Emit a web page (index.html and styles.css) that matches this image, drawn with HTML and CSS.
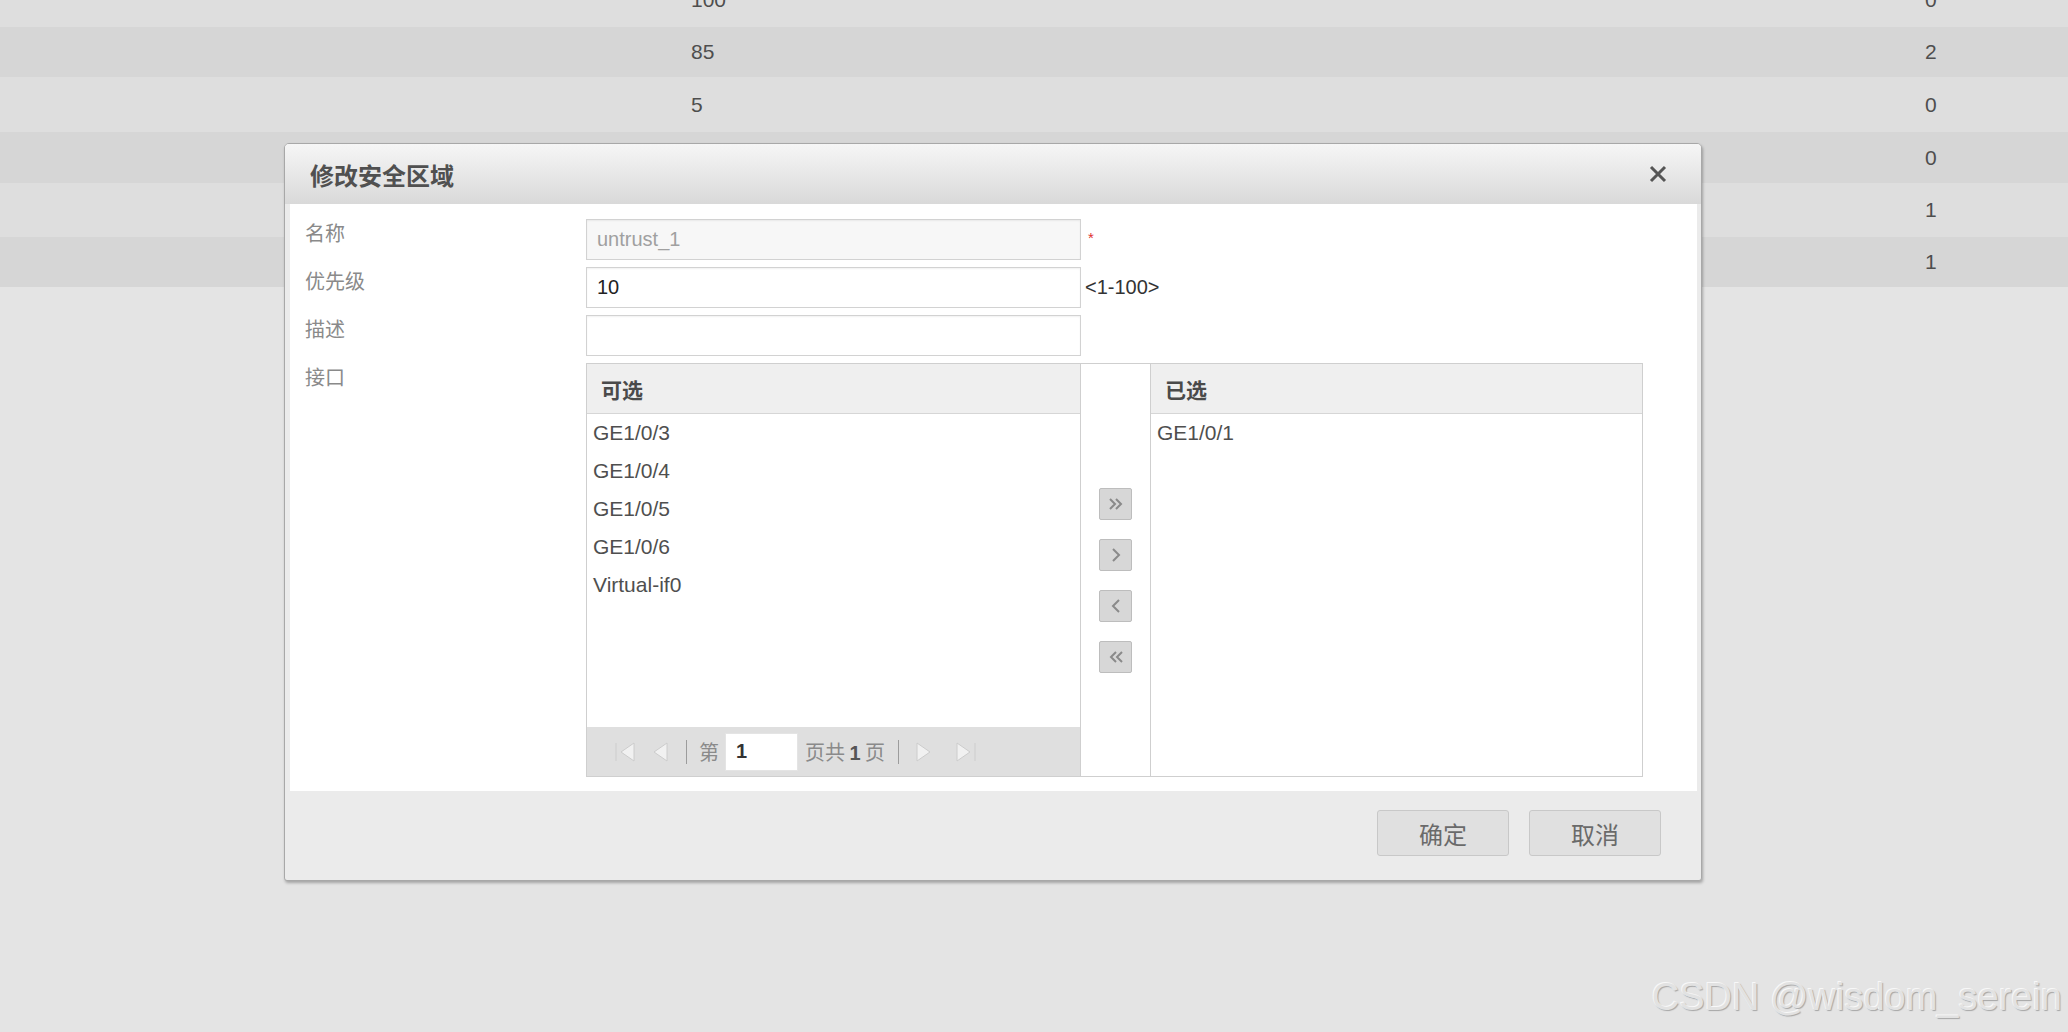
FILE: index.html
```html
<!DOCTYPE html>
<html lang="zh-CN">
<head>
<meta charset="utf-8">
<title>修改安全区域</title>
<link rel="stylesheet" href="styles.css">
</head>
<body>
<div class="table">
  <div class="row light h54"><span></span><span>100</span><span>0</span></div>
  <div class="row dark h50"><span></span><span>85</span><span>2</span></div>
  <div class="row light h55"><span></span><span>5</span><span>0</span></div>
  <div class="row dark h51"><span></span><span></span><span>0</span></div>
  <div class="row light h54"><span></span><span></span><span>1</span></div>
  <div class="row dark h50"><span></span><span></span><span>1</span></div>
</div>

<div class="dialog">
  <div class="dlg-head">
    <span class="dlg-title">修改安全区域</span>
    <svg class="close" width="18" height="18" viewBox="0 0 18 18"><path d="M2 2 L16 16 M16 2 L2 16" stroke="#555" stroke-width="3" fill="none"/></svg>
  </div>
  <div class="dlg-body">
    <div class="form">
      <div class="label">名称</div>
      <div class="field"><input class="txt disabled" value="untrust_1" readonly><span class="req">*</span></div>
      <div class="label">优先级</div>
      <div class="field"><input class="txt" value="10"><span class="hint">&lt;1-100&gt;</span></div>
      <div class="label">描述</div>
      <div class="field"><input class="txt" value=""></div>
      <div class="label">接口</div>
      <div class="transfer">
        <div class="plist left">
          <div class="phead">可选</div>
          <div class="items">
            <div class="item">GE1/0/3</div>
            <div class="item">GE1/0/4</div>
            <div class="item">GE1/0/5</div>
            <div class="item">GE1/0/6</div>
            <div class="item">Virtual-if0</div>
          </div>
          <div class="pager">
            <svg class="pg first" width="22" height="22" viewBox="0 0 22 22"><rect x="1" y="2" width="2" height="18" fill="#d6d6d6"/><path d="M20 2 L7 11 L20 20 Z" fill="#f1f1f1" stroke="#cccccc" stroke-width="1"/></svg>
            <svg class="pg prev" width="15" height="22" viewBox="0 0 15 22"><path d="M14 2 L1 11 L14 20 Z" fill="#f1f1f1" stroke="#cccccc" stroke-width="1"/></svg>
            <span class="sep"></span>
            <span class="ptext">第</span>
            <input class="pinput" value="1">
            <span class="ptext">页共 <b>1</b> 页</span>
            <span class="sep sep2"></span>
            <svg class="pg next" width="15" height="22" viewBox="0 0 15 22"><path d="M1 2 L14 11 L1 20 Z" fill="#f1f1f1" stroke="#cccccc" stroke-width="1"/></svg>
            <svg class="pg last" width="22" height="22" viewBox="0 0 22 22"><path d="M2 2 L15 11 L2 20 Z" fill="#f1f1f1" stroke="#cccccc" stroke-width="1"/><rect x="19" y="2" width="2" height="18" fill="#d6d6d6"/></svg>
          </div>
        </div>
        <div class="movers">
          <button class="mv"><svg width="16" height="14" viewBox="0 0 16 14"><path d="M2 2 L7 7 L2 12 M8 2 L13 7 L8 12" stroke="#8a8a8a" stroke-width="2" fill="none"/></svg></button>
          <button class="mv"><svg width="10" height="16" viewBox="0 0 10 16"><path d="M2 2 L8 8 L2 14" stroke="#8a8a8a" stroke-width="2" fill="none"/></svg></button>
          <button class="mv"><svg width="10" height="16" viewBox="0 0 10 16"><path d="M8 2 L2 8 L8 14" stroke="#8a8a8a" stroke-width="2" fill="none"/></svg></button>
          <button class="mv"><svg width="16" height="14" viewBox="0 0 16 14"><path d="M8 2 L3 7 L8 12 M14 2 L9 7 L14 12" stroke="#8a8a8a" stroke-width="2" fill="none"/></svg></button>
        </div>
        <div class="plist right">
          <div class="phead">已选</div>
          <div class="items">
            <div class="item">GE1/0/1</div>
          </div>
        </div>
      </div>
    </div>
  </div>
  <div class="dlg-foot">
    <button class="btn">确定</button>
    <button class="btn">取消</button>
  </div>
</div>

<div class="wm">CSDN @wisdom_serein</div>
</body>
</html>
```

FILE: styles.css
```css
* { box-sizing: border-box; }
html, body { margin: 0; padding: 0; }
body {
  width: 2068px;
  height: 1032px;
  overflow: hidden;
  position: relative;
  background: #e4e4e4;
  font-family: "Liberation Sans", "Noto Sans CJK SC", sans-serif;
  color: #555;
}

/* background table */
.table { margin-top: -27px; }
.row {
  display: grid;
  grid-template-columns: 691px 1234px 1fr;
  align-items: center;
  font-size: 21px;
  color: #4e4e4e;
}
.row.light { background: #dedede; }
.row.dark { background: #d6d6d6; }
.h50 { height: 50px; }
.h51 { height: 51px; }
.h54 { height: 54px; }
.h55 { height: 55px; }

/* dialog */
.dialog {
  position: absolute;
  left: 284px;
  top: 143px;
  width: 1418px;
  height: 738px;
  border: 1px solid #a8a8a8;
  border-radius: 5px 5px 3px 3px;
  background: #ebebeb;
  box-shadow: 1px 2px 3px rgba(0, 0, 0, 0.28);
  display: flex;
  flex-direction: column;
  overflow: hidden;
}
.dlg-head {
  height: 60px;
  flex: none;
  background: linear-gradient(#f6f6f6, #d9d9d9);
  display: flex;
  align-items: center;
  justify-content: space-between;
  padding: 0 34px 0 25px;
}
.dlg-title {
  font-family: "Noto Sans CJK SC", sans-serif;
  font-size: 24px;
  font-weight: 700;
  color: #505050;
}
.close { display: block; }

.dlg-body {
  flex: 1;
  background: #fff;
  margin: 0 4px 0 5px;
  padding: 15px 0 0 15px;
}
.form {
  display: grid;
  grid-template-columns: 281px auto;
  row-gap: 7px;
  align-items: start;
}
.label {
  font-family: "Noto Sans CJK SC", sans-serif;
  font-size: 20px;
  line-height: 28px;
  color: #8a8a8a;
}
.field {
  display: flex;
  align-items: center;
  height: 41px;
}
.txt {
  width: 495px;
  height: 41px;
  border: 1px solid #d2d2d2;
  box-shadow: inset 0 1px 2px rgba(0, 0, 0, 0.06);
  background: #fff;
  padding: 0 10px;
  font-family: "Liberation Sans", sans-serif;
  font-size: 20px;
  color: #222;
  outline: none;
  margin: 0;
}
.txt.disabled { background: #f7f7f7; color: #a0a0a0; }
.req {
  color: #e03030;
  font-size: 15px;
  margin-left: 7px;
  align-self: flex-start;
  margin-top: 10px;
}
.hint {
  margin-left: 4px;
  font-size: 20px;
  color: #333;
}

/* transfer */
.transfer {
  width: 1057px;
  height: 414px;
  border: 1px solid #cfcfcf;
  display: grid;
  grid-template-columns: 494px 69px 1fr;
}
.plist {
  display: flex;
  flex-direction: column;
  min-height: 0;
}
.plist.left { border-right: 1px solid #cfcfcf; }
.plist.right { border-left: 1px solid #cfcfcf; }
.phead {
  height: 50px;
  flex: none;
  background: #efefef;
  border-bottom: 1px solid #d6d6d6;
  display: flex;
  align-items: center;
  padding-left: 14px;
  font-family: "Noto Sans CJK SC", sans-serif;
  font-size: 21px;
  font-weight: 700;
  color: #4a4a4a;
}
.items { flex: 1; }
.item {
  height: 38px;
  line-height: 38px;
  padding-left: 6px;
  font-size: 21px;
  color: #4f4f4f;
}
.pager {
  height: 49px;
  flex: none;
  background: #dfdfdf;
  display: flex;
  align-items: center;
  padding-left: 27px;
}
.pg { display: block; flex: none; }
.pg.first { margin-right: 17px; }
.pg.prev { margin-right: 18px; }
.sep {
  width: 1px;
  height: 24px;
  background: #9c9c9c;
  margin-right: 12px;
}
.sep2 { margin-left: 13px; margin-right: 17px; }
.pg.next { margin-right: 24px; }
.ptext {
  font-family: "Noto Sans CJK SC", sans-serif;
  font-size: 20px;
  color: #8a8a8a;
}
.ptext b {
  font-family: "Liberation Sans", sans-serif;
  font-weight: 700;
  color: #555;
}
.pinput {
  width: 73px;
  height: 38px;
  margin: 0 7px 0 6px;
  border: 1px solid #e4e4e4;
  background: #fff;
  padding: 0 10px;
  font-family: "Liberation Sans", sans-serif;
  font-size: 20px;
  font-weight: 700;
  color: #333;
  outline: none;
}

.movers {
  display: flex;
  flex-direction: column;
  align-items: center;
  padding-top: 124px;
  gap: 19px;
  background: #fff;
}
.mv {
  width: 33px;
  height: 32px;
  padding: 0;
  margin: 0;
  border: 1px solid #bdbdbd;
  border-radius: 2px;
  background: #d7d7d7;
  display: flex;
  align-items: center;
  justify-content: center;
}
.mv svg { display: block; }

/* footer */
.dlg-foot {
  flex: none;
  height: 89px;
  display: flex;
  justify-content: flex-end;
  align-items: flex-start;
  gap: 20px;
  padding: 19px 40px 0 0;
}
.btn {
  width: 132px;
  height: 46px;
  margin: 0;
  border: 1px solid #c8c8c8;
  border-radius: 3px;
  background: #e0e0e0;
  font-family: "Noto Sans CJK SC", sans-serif;
  font-size: 24px;
  color: #6a6a6a;
  padding: 0;
}

/* watermark */
.wm {
  position: absolute;
  right: 6px;
  top: 977px;
  font-family: "Liberation Sans", sans-serif;
  font-size: 38px;
  line-height: 40px;
  color: #e2e2e2;
  text-shadow: -1px -1px 0 #f8f8f8, 1px 1px 1px #a6a6a6;
  white-space: nowrap;
}
```
